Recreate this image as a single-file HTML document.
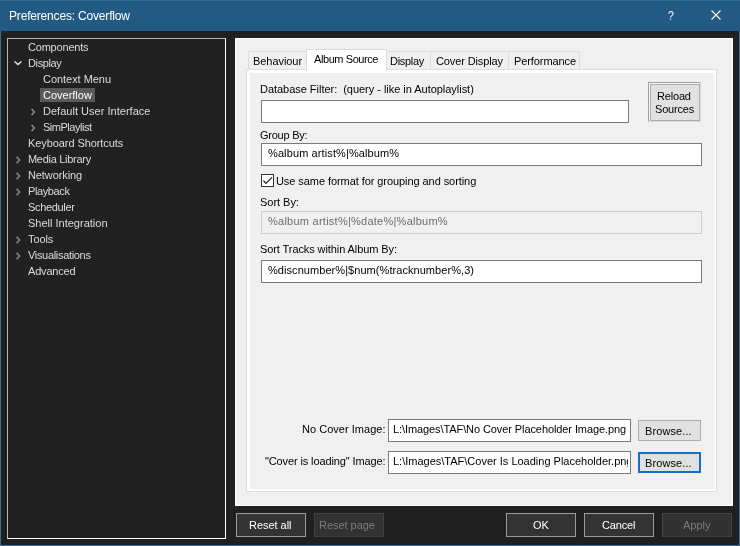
<!DOCTYPE html>
<html>
<head>
<meta charset="utf-8">
<title>Preferences: Coverflow</title>
<style>
html,body{margin:0;padding:0;}
body{width:740px;height:546px;overflow:hidden;background:#202020;position:relative;
  font-family:"Liberation Sans","DejaVu Sans",sans-serif;font-size:11px;line-height:13px;color:#000;}
*{box-sizing:border-box;}
.abs{position:absolute;}
.t{position:absolute;white-space:pre;line-height:13px;height:13px;will-change:transform;}
/* window chrome */
#win{position:absolute;left:0;top:0;width:740px;height:546px;background:#14283a;border:1px solid #4b6680;border-top:none;}
#title{position:absolute;left:0;top:0;width:740px;height:31px;background:#235a83;border-top:1px solid #2f6c9a;}
#tsh{position:absolute;left:1px;top:31px;width:738px;height:1px;background:#13273a;}
#title .cap{will-change:transform;position:absolute;left:9px;top:8px;font-size:12px;letter-spacing:-0.18px;line-height:14px;color:#fff;white-space:pre;}
#client{position:absolute;left:2px;top:32px;width:736px;height:512px;background:#202020;}
/* tree */
#tree{position:absolute;left:7px;top:38px;width:219px;height:501px;border:1px solid #fff;border-top-color:#b9b7b3;border-left-color:#b9b7b3;background:#212121;}
.ti{position:absolute;white-space:pre;color:#dcdcdc;line-height:13px;height:13px;will-change:transform;}
.sel{position:absolute;left:40px;top:88px;width:55px;height:14px;background:#5a5a5a;}
/* right panel */
#panel{position:absolute;left:235px;top:38px;width:498px;height:468px;background:#f0f0f0;border:1px solid #fff;}
/* tabs */
.tab{position:absolute;top:51px;height:19px;background:#f0f0f0;border:1px solid #dcdcdc;border-bottom:none;}
.tab.on{top:49px;height:22px;background:#fff;z-index:3;}
#pane{position:absolute;left:246px;top:69px;width:471px;height:423px;background:#fff;border:1px solid #dcdcdc;z-index:1;}
#page{position:absolute;left:250px;top:73px;width:464px;height:416px;background:#f0f0f0;z-index:2;}
.lay{position:absolute;left:0;top:0;width:740px;height:546px;z-index:5;}
.edit{position:absolute;height:23px;background:#fff;border:1px solid #7a7a7a;}
.edit.dis{background:#f0f0f0;border-color:#cccccc;}
.btn{position:absolute;background:#e1e1e1;border:1px solid #adadad;}
.dbtn{position:absolute;top:513px;width:70px;height:24px;background:#333333;border:1px solid #9b9b9b;}
.dbtn.dis{border-color:#424242;background:#323232;}
.dt{color:#fff;}
.dd{color:#7c7c7c;}
</style>
</head>
<body>
<div id="win"></div>
<div id="title">
  <div class="cap">Preferences: Coverflow</div>
  <svg class="abs" style="left:660px;top:-1px" width="80" height="31" viewBox="0 0 80 31">
    <path d="M51.5 10.5 L60.5 19.5 M60.5 10.5 L51.5 19.5" stroke="#fff" stroke-width="1.1" fill="none"/>
  </svg>
  <div class="abs" style="left:668px;top:8px;width:8px;font-size:13px;line-height:14px;color:#fff;transform:scaleX(0.8);transform-origin:0 0;will-change:transform;">?</div>
</div>
<div id="client"></div>
<div id="tsh"></div>

<div id="tree"></div>
<div class="sel"></div>
<div class="ti" style="left:28px;top:41px;letter-spacing:-0.2px;">Components</div>
<div class="ti" style="left:28px;top:57px;letter-spacing:-0.38px;">Display</div>
<div class="ti" style="left:43px;top:73px;letter-spacing:-0.04px;">Context Menu</div>
<div class="ti" style="left:43px;top:89px;letter-spacing:-0.01px;color:#fff;">Coverflow</div>
<div class="ti" style="left:43px;top:105px;letter-spacing:0.02px;">Default User Interface</div>
<div class="ti" style="left:43px;top:121px;letter-spacing:-0.48px;">SimPlaylist</div>
<div class="ti" style="left:28px;top:137px;letter-spacing:-0.08px;">Keyboard Shortcuts</div>
<div class="ti" style="left:28px;top:153px;letter-spacing:-0.29px;">Media Library</div>
<div class="ti" style="left:28px;top:169px;letter-spacing:-0.1px;">Networking</div>
<div class="ti" style="left:28px;top:185px;letter-spacing:-0.39px;">Playback</div>
<div class="ti" style="left:28px;top:201px;letter-spacing:-0.33px;">Scheduler</div>
<div class="ti" style="left:28px;top:217px;">Shell Integration</div>
<div class="ti" style="left:28px;top:233px;letter-spacing:-0.12px;">Tools</div>
<div class="ti" style="left:28px;top:249px;letter-spacing:-0.32px;">Visualisations</div>
<div class="ti" style="left:28px;top:265px;letter-spacing:-0.18px;">Advanced</div>
<svg class="abs" style="left:0;top:0" width="60" height="280" viewBox="0 0 60 280">
  <g fill="none" stroke="#e6e6e6" stroke-width="1.5">
    <path d="M14.6 61.5 L18 64.6 L21.4 61.5"/>
  </g>
  <g fill="none" stroke="#858589" stroke-width="1.7">
    <path d="M31.5 108.8 L34.3 112 L31.5 115.2"/>
    <path d="M31.5 124.8 L34.3 128 L31.5 131.2"/>
    <path d="M16.7 156.8 L19.5 160 L16.7 163.2"/>
    <path d="M16.7 172.8 L19.5 176 L16.7 179.2"/>
    <path d="M16.7 188.8 L19.5 192 L16.7 195.2"/>
    <path d="M16.7 236.8 L19.5 240 L16.7 243.2"/>
    <path d="M16.7 252.8 L19.5 256 L16.7 259.2"/>
  </g>
</svg>

<div id="panel"></div>
<div id="pane"></div>
<div id="page"></div>
<div class="tab" style="left:248px;width:59px;"></div>
<div class="tab" style="left:386px;width:45px;"></div>
<div class="tab" style="left:430px;width:79px;"></div>
<div class="tab" style="left:508px;width:72px;"></div>
<div class="tab on" style="left:306px;width:81px;"></div>

<div class="lay">
  <div class="edit" style="left:261px;top:100px;width:368px;"></div>
  <div class="abs" style="left:648px;top:82px;width:53px;height:40px;border:1px solid #a0a0a0;border-right-color:#dcdcdc;border-bottom-color:#dcdcdc;background:#f6f6f6;"></div>
  <div class="btn" style="left:650px;top:84px;width:50px;height:37px;"></div>
  <div class="edit" style="left:261px;top:143px;width:441px;"></div>
  <div class="abs" style="left:261px;top:174px;width:13px;height:13px;background:#fff;border:1px solid #333;"></div>
  <svg class="abs" style="left:261px;top:174px" width="13" height="13" viewBox="0 0 13 13"><path d="M2.4 6.6 L5 9.4 L11 3.3" fill="none" stroke="#1a1a1a" stroke-width="1.2"/></svg>
  <div class="edit dis" style="left:261px;top:211px;width:441px;height:23px;"></div>
  <div class="edit" style="left:261px;top:260px;width:441px;"></div>
  <div class="edit" style="left:388px;top:419px;width:243px;"></div>
  <div class="btn" style="left:638px;top:420px;width:63px;height:21px;"></div>
  <div class="edit" style="left:388px;top:451px;width:243px;"></div>
  <div class="btn" style="left:638px;top:452px;width:63px;height:21px;border:2px solid #1170c8;"></div>
  <div class="t" style="left:253px;top:55px;letter-spacing:-0.06px;">Behaviour</div>
  <div class="t" style="left:314px;top:53px;letter-spacing:-0.42px;">Album Source</div>
  <div class="t" style="left:390px;top:55px;letter-spacing:-0.3px;">Display</div>
  <div class="t" style="left:436px;top:55px;letter-spacing:-0.12px;">Cover Display</div>
  <div class="t" style="left:514px;top:55px;letter-spacing:-0.09px;">Performance</div>
  <div class="t" style="left:260px;top:83px;letter-spacing:-0.03px;">Database Filter:  (query - like in Autoplaylist)</div>
  <div class="t" style="left:657px;top:90px;letter-spacing:-0.18px;">Reload</div>
  <div class="t" style="left:655px;top:103px;letter-spacing:-0.2px;">Sources</div>
  <div class="t" style="left:260px;top:129px;letter-spacing:-0.25px;">Group By:</div>
  <div class="t" style="left:268px;top:147px;letter-spacing:0.11px;">%album artist%|%album%</div>
  <div class="t" style="left:276px;top:175px;letter-spacing:-0.07px;">Use same format for grouping and sorting</div>
  <div class="t" style="left:260px;top:196px;letter-spacing:-0.03px;">Sort By:</div>
  <div class="t" style="left:268px;top:215px;letter-spacing:0.25px;color:#6d6d6d;">%album artist%|%date%|%album%</div>
  <div class="t" style="left:260px;top:243px;letter-spacing:-0.09px;">Sort Tracks within Album By:</div>
  <div class="t" style="left:268px;top:264px;letter-spacing:0.06px;">%discnumber%|$num(%tracknumber%,3)</div>
  <div class="t" style="left:302px;top:423px;letter-spacing:0.03px;">No Cover Image:</div>
  <div class="t" style="left:393px;top:423px;letter-spacing:-0.09px;">L:\Images\TAF\No Cover Placeholder Image.png</div>
  <div class="t" style="left:645px;top:425px;letter-spacing:0.1px;">Browse...</div>
  <div class="t" style="left:265px;top:455px;letter-spacing:-0.12px;">"Cover is loading" Image:</div>
  <div class="t" style="left:393px;top:455px;width:235px;overflow:hidden;">L:\Images\TAF\Cover Is Loading Placeholder.png</div>
  <div class="t" style="left:645px;top:457px;letter-spacing:0.1px;">Browse...</div>
</div>

<div class="dbtn" style="left:236px;"></div>
<div class="dbtn dis" style="left:314px;"></div>
<div class="dbtn" style="left:506px;"></div>
<div class="dbtn" style="left:584px;"></div>
<div class="dbtn dis" style="left:662px;"></div>
<div class="t dt" style="left:249px;top:519px;letter-spacing:-0.03px;">Reset all</div>
<div class="t dd" style="left:319px;top:519px;letter-spacing:-0.03px;">Reset page</div>
<div class="t dt" style="left:533px;top:519px;">OK</div>
<div class="t dt" style="left:602px;top:519px;letter-spacing:-0.14px;">Cancel</div>
<div class="t dd" style="left:683px;top:519px;">Apply</div>
</body>
</html>
